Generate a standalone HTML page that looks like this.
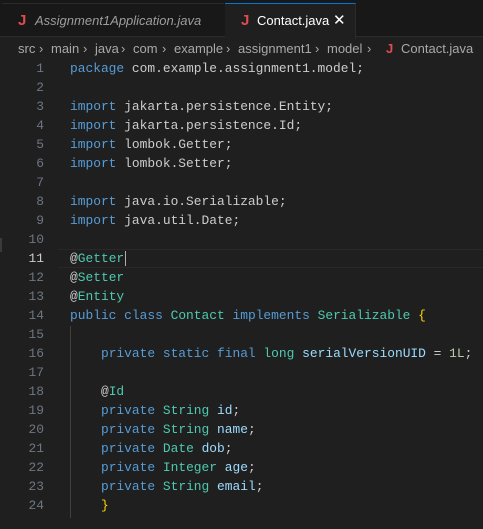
<!DOCTYPE html>
<html><head><style>
body{margin:0;width:483px;height:529px;background:#1f1f1f;overflow:hidden;position:relative;font-family:"Liberation Sans",sans-serif}
.tabs{position:absolute;left:0;top:0;width:483px;height:37px;background:#181818;border-bottom:1px solid #2b2b2b;box-sizing:border-box}
.tab{position:absolute;top:3px;height:34px;font-size:13px;line-height:34px;color:#9d9d9d}
.t1{left:2px;width:222px;border-top:1px solid #2b2b2b}
.t2{left:225px;width:130px;background:#1f1f1f;border-top:1px solid #0078d4;border-right:1px solid #2b2b2b;color:#fff;height:35px}
.J{color:#e04c4c;font-weight:bold;font-size:15px;position:absolute}
.bc{position:absolute;top:40px;font-size:13px;color:#a9a9a9;line-height:18px;white-space:pre}
.code{position:absolute;left:0;top:59px;font-family:"Liberation Mono",monospace;font-size:12.9px;line-height:19px;white-space:pre;color:#cccccc}
.ln{position:absolute;left:0;width:44px;text-align:right;color:#6e7681;font-family:"Liberation Mono",monospace;font-size:12.9px;line-height:19px;top:59px;white-space:pre}
.k{color:#569cd6}.t{color:#4ec9b0}.v{color:#9cdcfe}.n{color:#b5cea8}.b{color:#ffd700}
.hl{position:absolute;left:58px;right:0;top:249px;height:19px;border-top:1px solid #282828;border-bottom:1px solid #282828;box-sizing:border-box}
</style></head><body>
<div class="tabs">
<div class="tab t1"><span class="J" style="left:16px">J</span><span style="position:absolute;left:33px;font-style:italic">Assignment1Application.java</span></div>
<div class="tab t2"><span class="J" style="left:16px">J</span><span style="position:absolute;left:32px">Contact.java</span><span style="position:absolute;left:108px;font-size:15px">✕</span></div>
</div>
<span class="bc" style="left:18px">src</span><span class="bc" style="left:39px">›</span>
<span class="bc" style="left:51px">main</span><span class="bc" style="left:83px">›</span>
<span class="bc" style="left:95px">java</span><span class="bc" style="left:121px">›</span>
<span class="bc" style="left:133px">com</span><span class="bc" style="left:162px">›</span>
<span class="bc" style="left:174px">example</span><span class="bc" style="left:226px">›</span>
<span class="bc" style="left:238px">assignment1</span><span class="bc" style="left:315px">›</span>
<span class="bc" style="left:327px">model</span><span class="bc" style="left:367px">›</span>
<span class="bc" style="left:386px;color:#e04c4c;font-weight:bold">J</span>
<span class="bc" style="left:401px">Contact.java</span>
<div class="hl"></div>
<div style="position:absolute;left:70px;top:326px;width:1px;height:192px;background:#404040"></div>
<div style="position:absolute;left:0;top:238px;width:2px;height:14px;background:#3a3a3a"></div>
<div style="position:absolute;left:125px;top:251px;width:1px;height:15px;background:#aeafad"></div>
<div class="ln">1
2
3
4
5
6
7
8
9
10
<span style="color:#ccc">11</span>
12
13
14
15
16
17
18
19
20
21
22
23
24</div>
<div class="code" style="left:70px"><span class="k">package</span> com.example.assignment1.model;

<span class="k">import</span> jakarta.persistence.Entity;
<span class="k">import</span> jakarta.persistence.Id;
<span class="k">import</span> lombok.Getter;
<span class="k">import</span> lombok.Setter;

<span class="k">import</span> java.io.Serializable;
<span class="k">import</span> java.util.Date;

@<span class="t">Getter</span>
@<span class="t">Setter</span>
@<span class="t">Entity</span>
<span class="k">public class</span> <span class="t">Contact</span> <span class="k">implements</span> <span class="t">Serializable</span> <span class="b">{</span>

    <span class="k">private static final</span> <span class="t">long</span> <span class="v">serialVersionUID</span> = <span class="n">1L</span>;

    @<span class="t">Id</span>
    <span class="k">private</span> <span class="t">String</span> <span class="v">id</span>;
    <span class="k">private</span> <span class="t">String</span> <span class="v">name</span>;
    <span class="k">private</span> <span class="t">Date</span> <span class="v">dob</span>;
    <span class="k">private</span> <span class="t">Integer</span> <span class="v">age</span>;
    <span class="k">private</span> <span class="t">String</span> <span class="v">email</span>;
    <span class="b">}</span></div>
</body></html>
